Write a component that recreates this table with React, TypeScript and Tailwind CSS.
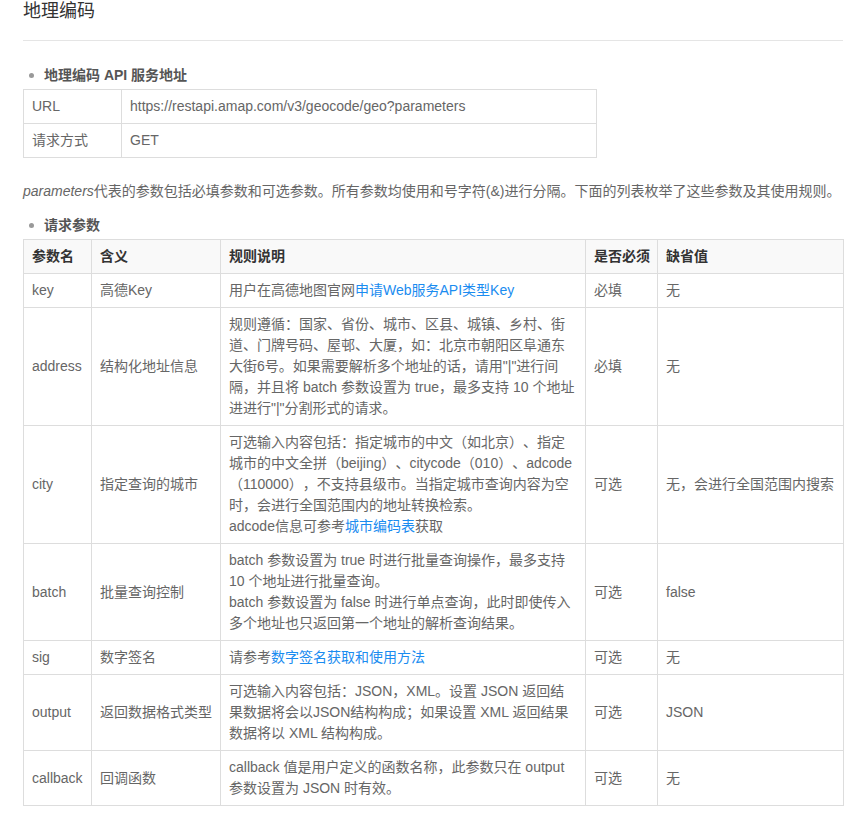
import React from 'react';

const font = 'font-["Liberation_Sans","Noto_Sans_CJK_SC",sans-serif]';

const Link = ({ children }: { children: React.ReactNode }) => (
  <a className="text-[#1a8cf0] no-underline">{children}</a>
);

const Bullet = ({ children }: { children: React.ReactNode }) => (
  <div className="flex items-center h-5 pl-[6px] text-[14px] font-bold text-[#555]">
    <span className="w-[5px] h-[5px] rounded-full bg-[#999] mr-[10px]" />
    {children}
  </div>
);

const cell = 'border border-[#ddd] px-2 py-[6px] align-middle';

const params: { name: string; meaning: string; rule: React.ReactNode; required: string; def: string }[] = [
  {
    name: 'key',
    meaning: '高德Key',
    rule: (
      <>
        用户在高德地图官网<Link>申请Web服务API类型Key</Link>
      </>
    ),
    required: '必填',
    def: '无',
  },
  {
    name: 'address',
    meaning: '结构化地址信息',
    rule: '规则遵循：国家、省份、城市、区县、城镇、乡村、街道、门牌号码、屋邨、大厦，如：北京市朝阳区阜通东大街6号。如果需要解析多个地址的话，请用"|"进行间隔，并且将 batch 参数设置为 true，最多支持 10 个地址进进行"|"分割形式的请求。',
    required: '必填',
    def: '无',
  },
  {
    name: 'city',
    meaning: '指定查询的城市',
    rule: (
      <>
        可选输入内容包括：指定城市的中文（如北京）、指定城市的中文全拼（beijing）、citycode（010）、adcode（110000），不支持县级市。当指定城市查询内容为空时，会进行全国范围内的地址转换检索。
        <br />
        adcode信息可参考<Link>城市编码表</Link>获取
      </>
    ),
    required: '可选',
    def: '无，会进行全国范围内搜索',
  },
  {
    name: 'batch',
    meaning: '批量查询控制',
    rule: (
      <>
        batch 参数设置为 true 时进行批量查询操作，最多支持 10 个地址进行批量查询。
        <br />
        batch 参数设置为 false 时进行单点查询，此时即使传入多个地址也只返回第一个地址的解析查询结果。
      </>
    ),
    required: '可选',
    def: 'false',
  },
  {
    name: 'sig',
    meaning: '数字签名',
    rule: (
      <>
        请参考<Link>数字签名获取和使用方法</Link>
      </>
    ),
    required: '可选',
    def: '无',
  },
  {
    name: 'output',
    meaning: '返回数据格式类型',
    rule: '可选输入内容包括：JSON，XML。设置 JSON 返回结果数据将会以JSON结构构成；如果设置 XML 返回结果数据将以 XML 结构构成。',
    required: '可选',
    def: 'JSON',
  },
  {
    name: 'callback',
    meaning: '回调函数',
    rule: 'callback 值是用户定义的函数名称，此参数只在 output 参数设置为 JSON 时有效。',
    required: '可选',
    def: '无',
  },
];

export default function App() {
  return (
    <div className={`${font} [text-spacing-trim:space-all] bg-white min-h-[815px] pl-[23px] pr-[10px] text-[14px] leading-[21px] text-[#666]`}>
      <h1 className="text-[18px] leading-[22px] text-[#333] font-normal">地理编码</h1>
      <hr className="mt-[18px] border-t border-[#e5e5e5]" />

      <div className="mt-[24px]">
        <Bullet>地理编码 API 服务地址</Bullet>
      </div>
      <table className="mt-[4px] w-[574px] border-collapse">
        <colgroup>
          <col className="w-[98px]" />
          <col />
        </colgroup>
        <tbody>
          <tr>
            <td className={cell}>URL</td>
            <td className={cell}>https://restapi.amap.com/v3/geocode/geo?parameters</td>
          </tr>
          <tr>
            <td className={cell}>请求方式</td>
            <td className={cell}>GET</td>
          </tr>
        </tbody>
      </table>

      <p className="mt-[23px]">
        <i>parameters</i>代表的参数包括必填参数和可选参数。所有参数均使用和号字符(&amp;)进行分隔。下面的列表枚举了这些参数及其使用规则。
      </p>

      <div className="mt-[13px]">
        <Bullet>请求参数</Bullet>
      </div>
      <table className="mt-[4px] w-[820px] border-collapse table-fixed">
        <colgroup>
          <col className="w-[68px]" />
          <col className="w-[129px]" />
          <col className="w-[365px]" />
          <col className="w-[72px]" />
          <col className="w-[186px]" />
        </colgroup>
        <thead>
          <tr className="bg-[#f9f9f9] text-[#333] font-bold text-left whitespace-nowrap">
            <th className={cell}>参数名</th>
            <th className={cell}>含义</th>
            <th className={cell}>规则说明</th>
            <th className={cell}>是否必须</th>
            <th className={cell}>缺省值</th>
          </tr>
        </thead>
        <tbody>
          {params.map((p) => (
            <tr key={p.name}>
              <td className={cell}>{p.name}</td>
              <td className={cell}>{p.meaning}</td>
              <td className={cell}>{p.rule}</td>
              <td className={cell}>{p.required}</td>
              <td className={`${cell} whitespace-nowrap`}>{p.def}</td>
            </tr>
          ))}
        </tbody>
      </table>
    </div>
  );
}
